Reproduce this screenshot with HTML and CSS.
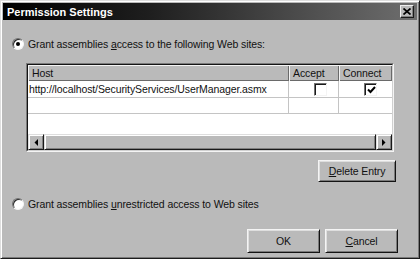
FILE: index.html
```html
<!DOCTYPE html>
<html>
<head>
<meta charset="utf-8">
<link rel="stylesheet" href="styles.css">
</head>
<body>
<div class="window">
  <div class="titlebar">
    <span class="title">Permission Settings</span>
    <span class="close"><svg width="8" height="7" viewBox="0 0 8 7"><path d="M0.5 0.5 L7.5 6.5 M7.5 0.5 L0.5 6.5" stroke="#000" stroke-width="1.7" fill="none"/></svg></span>
  </div>
  <div class="content">
    <div class="option first"><span class="radio checked"></span><span>Grant assemblies <u>a</u>ccess to the following Web sites:</span></div>
    <div class="list">
      <div class="list-inner">
        <div class="lv-header">
          <div class="hcell">Host</div>
          <div class="hcell">Accept</div>
          <div class="hcell">Connect</div>
        </div>
        <div class="lv-row r1">
          <div class="cell">http://localhost/SecurityServices/UserManager.asmx</div>
          <div class="cell check-cell"><span class="checkbox"></span></div>
          <div class="cell check-cell"><span class="checkbox"><svg width="9" height="8" viewBox="0 0 9 8"><path d="M1 3.5 L3.5 6 L8 1" stroke="#000" stroke-width="2" fill="none"/></svg></span></div>
        </div>
        <div class="lv-row r2">
          <div class="cell"></div>
          <div class="cell"></div>
          <div class="cell"></div>
        </div>
        <div class="lv-empty"></div>
        <div class="hscroll">
          <span class="sbtn"><svg width="4" height="7" viewBox="0 0 4 7"><polygon points="4,0 0.5,3.5 4,7" fill="#000"/></svg></span>
          <span class="thumb"></span>
          <span class="sbtn"><svg width="4" height="7" viewBox="0 0 4 7"><polygon points="0,0 3.5,3.5 0,7" fill="#000"/></svg></span>
        </div>
      </div>
    </div>
    <div class="delete-row"><button class="btn delete"><u>D</u>elete Entry</button></div>
    <div class="option second"><span class="radio"></span><span>Grant assemblies <u>u</u>nrestricted access to Web sites</span></div>
    <div class="footer">
      <button class="btn dlg">OK</button>
      <button class="btn dlg"><u>C</u>ancel</button>
    </div>
  </div>
</div>
</body>
</html>
```
FILE: styles.css
```css
* { box-sizing: border-box; }
html, body { margin: 0; padding: 0; }
body {
  width: 420px;
  height: 259px;
  overflow: hidden;
  background: #bababa;
  font-family: "Liberation Sans", Arial, sans-serif;
  font-size: 10.5px;
  letter-spacing: -0.1px;
  color: #111;
}
.window {
  width: 420px;
  height: 259px;
  border: 1px solid;
  border-color: #dedede #1c1c1c #1c1c1c #dedede;
  box-shadow: inset 1px 1px #ffffff, inset -1px -1px #7a7a7a;
  padding: 2px;
  background: #bababa;
  display: flex;
  flex-direction: column;
}
.titlebar {
  height: 17px;
  flex: none;
  background: linear-gradient(to right, #000000 0%, #1e1e1e 35%, #4a4a4a 70%, #6e6e6e 100%);
  display: flex;
  align-items: center;
  justify-content: space-between;
  padding: 0 3px 0 4px;
}
.title {
  color: #fff;
  font-weight: bold;
  font-size: 11px;
  letter-spacing: 0;
}
.close {
  width: 14px;
  height: 13px;
  background: #bababa;
  border: 1px solid;
  border-color: #f0f0f0 #1a1a1a #1a1a1a #f0f0f0;
  box-shadow: inset -1px -1px #808080;
  display: flex;
  align-items: center;
  justify-content: center;
}
.content {
  flex: 1;
  display: flex;
  flex-direction: column;
  padding: 0 19px 0 9px;
}
.option {
  display: flex;
  align-items: center;
  height: 12px;
  gap: 4px;
  white-space: nowrap;
}
.option.first { margin-top: 18px; }
.option.second { margin-top: 16px; }
.radio {
  width: 12px;
  height: 12px;
  flex: none;
  border-radius: 50%;
  border: 1px solid;
  border-color: #707070 #f4f4f4 #f4f4f4 #707070;
  background: #fff;
  box-shadow: inset 1px 1px #2a2a2a;
  display: flex;
  align-items: center;
  justify-content: center;
}
.radio.checked::after {
  content: "";
  width: 4px;
  height: 4px;
  border-radius: 50%;
  background: #000;
}
.list {
  margin: 13px 4px 0 14px;
  height: 89px;
  border: 1px solid;
  border-color: #7a7a7a #f4f4f4 #f4f4f4 #7a7a7a;
}
.list-inner {
  height: 100%;
  border: 1px solid;
  border-color: #141414 #d0d0d0 #d0d0d0 #141414;
  background: #fff;
  display: flex;
  flex-direction: column;
}
.lv-header, .lv-row {
  display: grid;
  grid-template-columns: 261px 50px 1fr;
}
.lv-header { height: 16px; }
.hcell {
  background: #bababa;
  box-shadow: inset 1px 1px #f4f4f4, inset -1px -1px #6a6a6a;
  padding: 2px 0 0 4px;
  line-height: 12px;
}
.lv-row.r1 { height: 17px; }
.lv-row.r2 { height: 16px; }
.cell {
  border-right: 1px solid #c4c4c4;
  border-bottom: 1px solid #c4c4c4;
  padding-left: 1px;
  display: flex;
  align-items: center;
  white-space: nowrap;
}
.cell:last-child { border-right: none; }
.check-cell { padding-left: 25px; }
.checkbox {
  width: 13px;
  height: 13px;
  border: 1px solid;
  border-color: #707070 #f4f4f4 #f4f4f4 #707070;
  box-shadow: inset 1px 1px #1a1a1a;
  background: #fff;
  display: flex;
  align-items: center;
  justify-content: center;
  padding: 1px 0 0 1px;
}
.lv-empty { flex: 1; }
.hscroll {
  height: 16px;
  display: flex;
  background: #bababa;
}
.sbtn, .thumb {
  height: 16px;
  border: 1px solid;
  border-color: #dedede #1a1a1a #1a1a1a #dedede;
  box-shadow: inset 1px 1px #fff, inset -1px -1px #808080;
  background: #bababa;
}
.sbtn {
  width: 16px;
  flex: none;
  display: flex;
  align-items: center;
  justify-content: center;
}
.thumb { flex: 1; }
.delete-row {
  display: flex;
  justify-content: flex-end;
  margin-top: 8px;
  margin-right: 2px;
}
.btn {
  font-family: "Liberation Sans", Arial, sans-serif;
  font-size: 10.5px;
  letter-spacing: -0.1px;
  color: #111;
  background: #bababa;
  border: 1px solid;
  border-color: #f4f4f4 #141414 #141414 #f4f4f4;
  box-shadow: inset 1px 1px #dedede, inset -1px -1px #7a7a7a;
  padding: 0;
  margin: 0;
}
.btn.delete { width: 78px; height: 22px; }
.footer {
  display: flex;
  justify-content: flex-end;
  gap: 5px;
  margin-top: 19px;
}
.btn.dlg { width: 73px; height: 24px; }
```
